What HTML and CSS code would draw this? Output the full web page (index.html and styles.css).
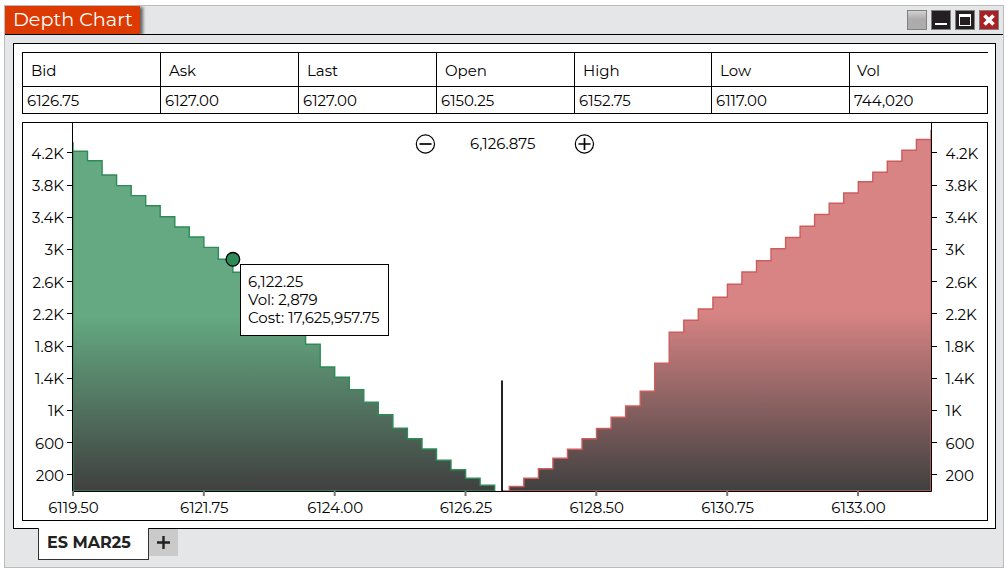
FILE: index.html
```html
<!DOCTYPE html>
<html lang="en">

<head>
    <meta charset="UTF-8">
    <meta name="viewport" content="width=device-width, initial-scale=1.0">
    <title>Depth Chart</title>
    <link rel="stylesheet" href="styles.css">
</head>

<body>
    <div class="window">
        <div class="title-bar">
            <div class="title">Depth Chart</div>
            <div class="buttons">
                <div class="btn btn-blank"></div>
                <div class="btn btn-dark">
                    <svg width="18" height="18"><path d="M3 13h12" stroke="#fff" stroke-width="2"/></svg>
                </div>
                <div class="btn btn-dark">
                    <svg width="18" height="18"><path d="M3 4.5h12" stroke="#fff" stroke-width="3"/><rect x="3.5" y="3.5" width="11" height="11" fill="none" stroke="#fff"/></svg>
                </div>
                <div class="btn btn-close">
                    <svg width="18" height="18"><path d="M4.5 4.5l9 9M13.5 4.5l-9 9" stroke="#fff" stroke-width="3.6"/></svg>
                </div>
            </div>
        </div>
        <div class="content">
            <div class="quotes">
                <div class="quote"><div class="name">Bid</div><div class="value">6126.75</div></div>
                <div class="quote"><div class="name">Ask</div><div class="value">6127.00</div></div>
                <div class="quote"><div class="name">Last</div><div class="value">6127.00</div></div>
                <div class="quote"><div class="name">Open</div><div class="value">6150.25</div></div>
                <div class="quote"><div class="name">High</div><div class="value">6152.75</div></div>
                <div class="quote"><div class="name">Low</div><div class="value">6117.00</div></div>
                <div class="quote"><div class="name">Vol</div><div class="value">744,020</div></div>
            </div>
            <div class="chart">
                <svg id="depth" width="964" height="397" viewBox="23 123 964 397">
                    <defs>
                        <linearGradient id="bidFill" x1="0" y1="0" x2="0" y2="1">
                            <stop offset="50%" stop-color="#64a981"/>
                            <stop offset="100%" stop-color="#404040"/>
                        </linearGradient>
                        <linearGradient id="askFill" x1="0" y1="0" x2="0" y2="1">
                            <stop offset="50%" stop-color="#d98484"/>
                            <stop offset="100%" stop-color="#404040"/>
                        </linearGradient>
                    </defs>
                    <path id="bids" class="bids"/>
                    <path id="asks" class="asks"/>
                    <path class="axis" d="M72.5 123V491.5H931.5V123"/>
                    <path class="mid" d="M502 380.5V491"/>
                    <g id="ticks"></g>
                    <g class="zoom">
                        <circle cx="425.4" cy="144" r="9.1"/>
                        <path d="M419.5 144h12"/>
                        <circle cx="584.4" cy="144" r="9.1"/>
                        <path d="M578.5 144h12M584.5 138v12"/>
                    </g>
                    <text x="502.7" y="149" text-anchor="middle">6,126.875</text>
                    <circle class="marker" cx="232.9" cy="259.3" r="6.8"/>
                </svg>
                <div class="tooltip">
                    <div class="tip-price">6,122.25</div>
                    <div class="tip-vol">Vol: 2,879</div>
                    <div class="tip-cost">Cost: 17,625,957.75</div>
                </div>
            </div>
        </div>
        <div class="tabs">
            <div class="tab">ES MAR25</div>
            <div class="add"><svg width="13" height="13"><path d="M0 6.5h13M6.5 0v13" stroke="#222" stroke-width="2.4"/></svg></div>
        </div>
    </div>
    <script src="script.js"></script>
</body>

</html>
```
FILE: styles.css
```css
* {
    padding: 0;
    margin: 0;
    box-sizing: border-box;
}

body {
    background: #fff;
    color: #000;
    font: 15px/18px Montserrat, Inter, sans-serif;
}

.window {
    width: 1000px;
    height: 563px;
    margin: 5px 0 0 4px;
    border: 1px solid #bbb;
    background: #e5e6e8;
}

.title-bar {
    display: flex;
    justify-content: space-between;
    height: 29px;
    border-bottom: 1px solid #000;
}

.title {
    width: 135px;
    height: 28px;
    padding-left: 8px;
    background: #dc3a00;
    box-shadow: 3px 1px 3px #666;
    clip-path: inset(0 -8px 0 0);
    color: #fff;
    font-size: 19.2px;
    line-height: 27px;
    white-space: nowrap;
}

.buttons {
    display: flex;
    gap: 4px;
    padding: 4px 4px 0 0;
}

.btn {
    width: 20px;
    height: 20px;
    border: 1px solid #808080;
}

.btn svg {
    display: block;
}

.btn-blank {
    background: linear-gradient(#d2d2d2, #aeabac 45%);
}

.btn-dark {
    background: #231f20;
}

.btn-close {
    background: #a82024;
}

.content {
    width: 983px;
    height: 486px;
    margin: 8px 0 0 8px;
    padding: 8px;
    border: 1px solid #000;
    background: #fff;
}

.quotes {
    display: grid;
    grid-template-columns: 138px 138px 138px 138px 137px 138px 139px;
    width: 966px;
    height: 62px;
    border-top: 1px solid #000;
}

.quote {
    border-left: 1px solid #000;
}

.name {
    height: 34px;
    padding-left: 8px;
    border-bottom: 1px solid #000;
    line-height: 36px;
}

.value {
    height: 27px;
    padding-left: 4px;
    border-bottom: 1px solid #000;
    line-height: 28px;
}

.quote:last-child .name {
    padding-left: 7px;
}

.quote:last-child .value {
    border-right: 1px solid #000;
}

.chart {
    position: relative;
    width: 966px;
    height: 399px;
    margin-top: 8px;
    border: 1px solid #000;
}

.chart > svg {
    display: block;
}

.bids {
    fill: url(#bidFill);
    stroke: #2e8b57;
    stroke-width: 1.4;
}

.asks {
    fill: url(#askFill);
    stroke: #cd5c5c;
    stroke-width: 1.4;
}

.axis {
    fill: none;
    stroke: #000;
}

.mid {
    stroke: #222;
    stroke-width: 2;
}

.tick {
    stroke: #000;
}

.tick-x {
    stroke: #777;
    stroke-width: 2;
}

.zoom {
    fill: none;
    stroke: #000;
    stroke-width: 1.2;
}

.zoom path {
    stroke-width: 1.7;
}

.marker {
    fill: #2e8b57;
    stroke: #000;
    stroke-width: 1.3;
}

.tooltip {
    position: absolute;
    left: 217px;
    top: 141px;
    width: 149px;
    height: 72px;
    padding: 8px 0 0 7px;
    border: 1px solid #000;
    background: #fff;
    white-space: nowrap;
}

.tabs {
    display: flex;
    margin: -1px 0 0 33px;
}

.tab {
    width: 111px;
    height: 32px;
    padding-left: 8px;
    border: 1px solid #333;
    border-top: 0;
    background: #fff;
    color: #222;
    font-size: 16px;
    font-weight: 700;
    line-height: 29px;
    white-space: nowrap;
}

.add {
    display: flex;
    width: 29px;
    height: 27px;
    margin-top: 1px;
    padding: 7px 0 0 8px;
    background: #cacaca;
}
```
FILE: script.js
```js
var base = 491;
var step = 14.54;

// top of each price level, from the lowest price to the highest
var bids = [151.3, 160.8, 175, 185.6, 195.6, 205.7, 216.7, 227, 237, 247.4, 259.3, 272.3, 285, 297, 309, 321,
    344.3, 367, 377.3, 389.7, 402.3, 414.7, 428.3, 438.7, 449, 460.3, 469.7, 478.3, 485.3];
var asks = [486.5, 478.3, 468.7, 458.3, 449.3, 438.7, 428.5, 417.3, 406, 391.3, 363.2, 332.3, 320.3, 309, 297.3,
    284.3, 272, 260.7, 248.8, 237.5, 226.3, 214.5, 203.3, 193, 181.7, 172.2, 161.3, 150.3, 139.5];

var prices = ['6119.50', '6121.75', '6124.00', '6126.25', '6128.50', '6130.75', '6133.00'];
var volumes = ['200', '600', '1K', '1.4K', '1.8K', '2.2K', '2.6K', '3K', '3.4K', '3.8K', '4.2K'];

function steps(list, x) {
    var d = '';
    for (var i = 0; i < list.length; i++) {
        d += 'V' + list[i] + 'H' + (x + step * (i + 1)).toFixed(1);
    }
    return d;
}

function label(text, x, y, anchor) {
    return '<text x="' + x + '" y="' + y + '" text-anchor="' + anchor + '">' + text + '</text>';
}

document.getElementById('bids').setAttribute('d', 'M73 ' + base + 'V142' + steps(bids, 73) + 'V' + base + 'Z');
document.getElementById('asks').setAttribute('d', 'M502 ' + base + 'H509.3' + steps(asks, 509.3) + 'V130V' + base + 'Z');

var html = '';
for (var i = 0; i < volumes.length; i++) {
    var y = Math.floor(474.9 - i * 32.2) + 0.5;
    var textY = Math.round(474.7 - i * 32.2) + 6;
    html += '<path class="tick" d="M67 ' + y + 'h5M932 ' + y + 'h5"/>';
    html += label(volumes[i], 64, textY, 'end') + label(volumes[i], 945.5, textY, 'start');
}
for (var j = 0; j < prices.length; j++) {
    var x = 73 + j * 130.83;
    html += '<path class="tick-x" d="M' + x.toFixed(1) + ' 491v5"/>';
    html += label(prices[j], (x + 0.5).toFixed(1), 513, 'middle');
}
document.getElementById('ticks').innerHTML = html;
```
